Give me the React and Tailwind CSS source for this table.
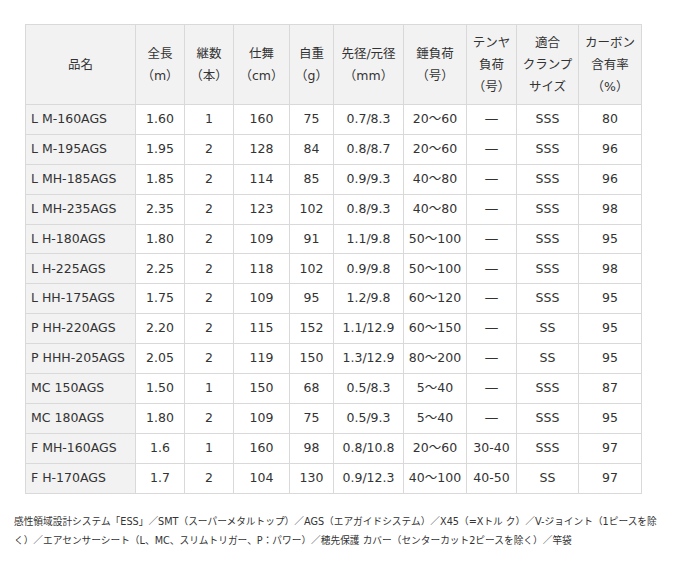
import React from "react";

const rows = [
  ["L M-160AGS", "1.60", "1", "160", "75", "0.7/8.3", "20～60", "―", "SSS", "80"],
  ["L M-195AGS", "1.95", "2", "128", "84", "0.8/8.7", "20～60", "―", "SSS", "96"],
  ["L MH-185AGS", "1.85", "2", "114", "85", "0.9/9.3", "40～80", "―", "SSS", "96"],
  ["L MH-235AGS", "2.35", "2", "123", "102", "0.8/9.3", "40～80", "―", "SSS", "98"],
  ["L H-180AGS", "1.80", "2", "109", "91", "1.1/9.8", "50～100", "―", "SSS", "95"],
  ["L H-225AGS", "2.25", "2", "118", "102", "0.9/9.8", "50～100", "―", "SSS", "98"],
  ["L HH-175AGS", "1.75", "2", "109", "95", "1.2/9.8", "60～120", "―", "SSS", "95"],
  ["P HH-220AGS", "2.20", "2", "115", "152", "1.1/12.9", "60～150", "―", "SS", "95"],
  ["P HHH-205AGS", "2.05", "2", "119", "150", "1.3/12.9", "80～200", "―", "SS", "95"],
  ["MC 150AGS", "1.50", "1", "150", "68", "0.5/8.3", "5～40", "―", "SSS", "87"],
  ["MC 180AGS", "1.80", "2", "109", "75", "0.5/9.3", "5～40", "―", "SSS", "95"],
  ["F MH-160AGS", "1.6", "1", "160", "98", "0.8/10.8", "20～60", "30-40", "SSS", "97"],
  ["F H-170AGS", "1.7", "2", "104", "130", "0.9/12.3", "40～100", "40-50", "SS", "97"],
];

const headers = [
  ["品名"],
  ["全長", "（m）"],
  ["継数", "（本）"],
  ["仕舞", "（cm）"],
  ["自重", "（g）"],
  ["先径/元径", "（mm）"],
  ["錘負荷", "（号）"],
  ["テンヤ", "負荷", "（号）"],
  ["適合", "クランプ", "サイズ"],
  ["カーボン", "含有率", "（%）"],
];

const widths = [110, 49, 49, 56, 44, 70, 63, 50, 62, 63];

export default function App() {
  return (
    <div
      className="w-[683px] h-[565px] bg-white text-[#333] overflow-hidden"
      style={{ fontFamily: '"DejaVu Sans", "Noto Sans CJK JP", sans-serif' }}
    >
      <div className="pt-[24px] pl-[25px]">
        <table className="table-fixed border-collapse text-[12.5px] w-[617px]">
          <colgroup>
            {widths.map((w, i) => (
              <col key={i} style={{ width: w }} />
            ))}
          </colgroup>
          <thead>
            <tr className="h-[80px]">
              {headers.map((h, i) => (
                <th
                  key={i}
                  className="border border-[#d9d9d9] bg-[#f2f2f2] font-normal text-center align-middle leading-[22px] p-0"
                >
                  {h.map((l, j) => (
                    <div key={j}>{l}</div>
                  ))}
                </th>
              ))}
            </tr>
          </thead>
          <tbody>
            {rows.map((r, i) => (
              <tr key={i} className="h-[29.9px]">
                {r.map((c, j) => (
                  <td
                    key={j}
                    className={
                      j === 0
                        ? "border border-[#d9d9d9] bg-[#f2f2f2] text-left pl-[5px] p-0 align-middle whitespace-nowrap"
                        : "border border-[#d9d9d9] text-center p-0 align-middle whitespace-nowrap"
                    }
                  >
                    {c}
                  </td>
                ))}
              </tr>
            ))}
          </tbody>
        </table>
      </div>
      <div className="pl-[14px] mt-[18px] text-[9.7px] leading-[19px] text-[#333]">
        <div className="whitespace-nowrap">
          感性領域設計システム「ESS」／SMT（スーパーメタルトップ）／AGS（エアガイドシステム）／X45（=Xトル ク）／V-ジョイント（1ピースを除
        </div>
        <div className="whitespace-nowrap">
          く）／エアセンサーシート（L、MC、スリムトリガー、P：パワー）／穂先保護 カバー（センターカット2ピースを除く）／竿袋
        </div>
      </div>
    </div>
  );
}
